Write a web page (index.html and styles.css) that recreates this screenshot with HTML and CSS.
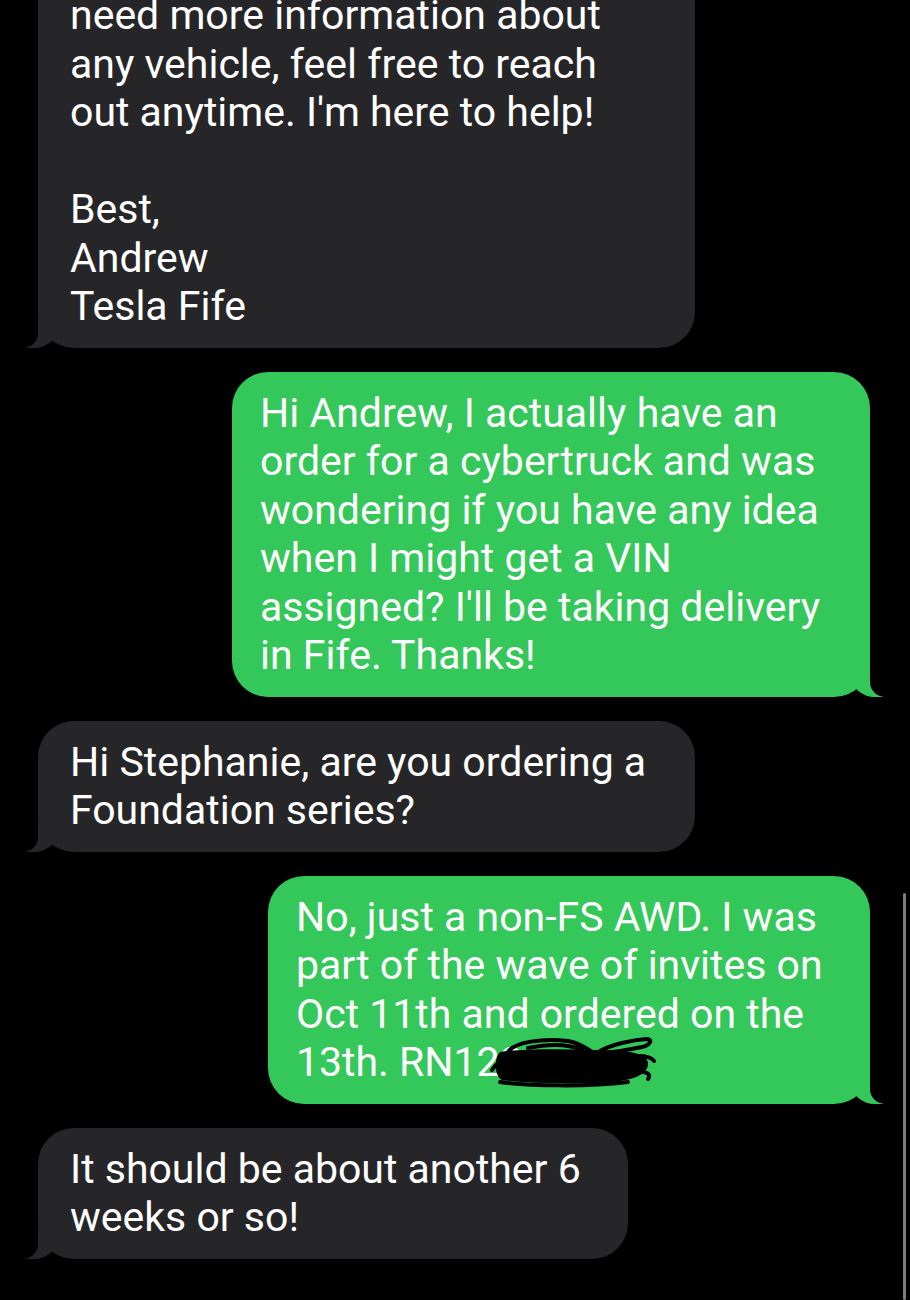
FILE: index.html
```html
<!DOCTYPE html>
<html lang="en">

<head>
    <meta charset="UTF-8">
    <meta name="viewport" content="width=device-width, initial-scale=1.0">
    <title>Messages</title>
    <link rel="stylesheet" href="styles.css">
</head>

<body>
    <div id="thread">
        <div class="bubble received first">
            need more information about<br>
            any vehicle, feel free to reach<br>
            out anytime. I'm here to help!<br>
            <br>
            Best,<br>
            Andrew<br>
            Tesla Fife
        </div>

        <div class="bubble sent sent-one">
            Hi Andrew, I actually have an<br>
            order for a cybertruck and was<br>
            wondering if you have any idea<br>
            when I might get a VIN<br>
            assigned? I'll be taking delivery<br>
            in Fife. Thanks!
        </div>

        <div class="bubble received wide">
            Hi Stephanie, are you ordering a<br>
            Foundation series?
        </div>

        <div class="bubble sent sent-two">
            No, just a non-FS AWD. I was<br>
            part of the wave of invites on<br>
            Oct 11th and ordered on the<br>
            13th. RN12<span class="redact">2<svg viewBox="0 0 170 52" width="170" height="52">
                    <path d="M12 16 C40 12 90 13 130 15 C150 16 160 20 160 28 C160 40 140 46 110 47 C70 48 35 47 14 44 C6 40 6 22 12 16 Z" fill="#000" />
                    <path d="M20 16 C26 6 55 2 80 5 C92 7 98 12 104 16 M40 12 C60 8 80 8 94 14 M112 15 C125 8 145 4 158 3 C165 3 163 9 154 11 C140 14 126 16 116 17 M150 20 C158 20 164 22 166 25 M148 36 C158 35 164 38 160 43 M4 34 C8 28 12 24 20 24 M12 46 C40 50 100 51 140 46" fill="none" stroke="#000" stroke-width="4" stroke-linecap="round" />
                </svg></span>
        </div>

        <div class="bubble received short">
            It should be about another 6<br>
            weeks or so!
        </div>
    </div>
    <div class="scroll-indicator"></div>
</body>

</html>
```

FILE: styles.css
```css
body {
    margin: 0;
    padding: 0;
    background-color: #000;
    font-family: Roboto, "Liberation Sans", sans-serif;
    color: #fff;
    overflow: hidden;
    height: 1300px;
    position: relative;
}

#thread {
    display: flex;
    flex-direction: column;
    gap: 24px;
    padding: 0 40px 0 38px;
}

.bubble {
    position: relative;
    box-sizing: border-box;
    padding: 17px 30px 17px 32px;
    border-radius: 36px;
    font-size: 41px;
    line-height: 48.5px;
    white-space: nowrap;
}

.received {
    align-self: flex-start;
    background-color: #262629;
}

.sent {
    align-self: flex-end;
    background-color: #34c759;
    padding-left: 28px;
}

.first {
    margin-top: -26px;
    width: 657px;
    border-top-left-radius: 0;
    border-top-right-radius: 0;
}

.wide {
    width: 657px;
}

.short {
    width: 590px;
}

.sent-one {
    width: 638px;
}

.sent-two {
    width: 602px;
}

/* tails */
.bubble::before,
.bubble::after {
    content: "";
    position: absolute;
    bottom: 0;
    height: 34px;
}

.received::before {
    left: -12px;
    width: 32px;
    background-color: #262629;
    border-bottom-right-radius: 24px 21px;
}

.received::after {
    left: -36px;
    width: 36px;
    background-color: #000;
    border-bottom-right-radius: 15px;
}

.sent::before {
    right: -13px;
    width: 32px;
    background-color: #34c759;
    border-bottom-left-radius: 24px 21px;
}

.sent::after {
    right: -37px;
    width: 37px;
    background-color: #000;
    border-bottom-left-radius: 15px;
}

.redact {
    position: relative;
}

.redact svg {
    position: absolute;
    left: -12px;
    top: -2px;
}

.scroll-indicator {
    position: absolute;
    right: 4px;
    top: 893px;
    bottom: 0;
    width: 3px;
    border-radius: 2px;
    background-color: #7c7c80;
}
```
